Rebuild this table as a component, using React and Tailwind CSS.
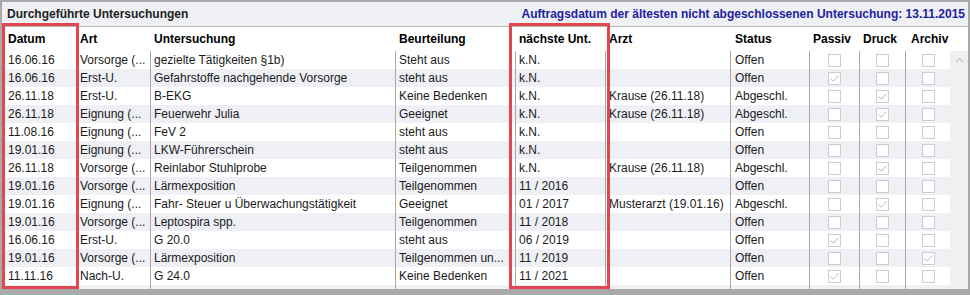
import React from 'react';

const rows = [
  ['16.06.16', 'Vorsorge (...', 'gezielte Tätigkeiten §1b)', 'Steht aus', 'k.N.', '', 'Offen', false, false, false],
  ['16.06.16', 'Erst-U.', 'Gefahrstoffe nachgehende Vorsorge', 'steht aus', 'k.N.', '', 'Offen', true, false, false],
  ['26.11.18', 'Erst-U.', 'B-EKG', 'Keine Bedenken', 'k.N.', 'Krause (26.11.18)', 'Abgeschl.', false, true, false],
  ['26.11.18', 'Eignung (...', 'Feuerwehr Julia', 'Geeignet', 'k.N.', 'Krause (26.11.18)', 'Abgeschl.', false, true, false],
  ['11.08.16', 'Eignung (...', 'FeV 2', 'steht aus', 'k.N.', '', 'Offen', false, false, false],
  ['19.01.16', 'Eignung (...', 'LKW-Führerschein', 'steht aus', 'k.N.', '', 'Offen', false, false, false],
  ['26.11.18', 'Vorsorge (...', 'Reinlabor Stuhlprobe', 'Teilgenommen', 'k.N.', 'Krause (26.11.18)', 'Abgeschl.', false, true, false],
  ['19.01.16', 'Vorsorge (...', 'Lärmexposition', 'Teilgenommen', '11 / 2016', '', 'Offen', false, false, false],
  ['19.01.16', 'Eignung (...', 'Fahr- Steuer u Überwachungstätigkeit', 'Geeignet', '01 / 2017', 'Musterarzt (19.01.16)', 'Abgeschl.', false, true, false],
  ['19.01.16', 'Vorsorge (...', 'Leptospira spp.', 'Teilgenommen', '11 / 2018', '', 'Offen', false, false, false],
  ['16.06.16', 'Erst-U.', 'G 20.0', 'steht aus', '06 / 2019', '', 'Offen', true, false, false],
  ['19.01.16', 'Vorsorge (...', 'Lärmexposition', 'Teilgenommen un...', '11 / 2019', '', 'Offen', false, false, true],
  ['11.11.16', 'Nach-U.', 'G 24.0', 'Keine Bedenken', '11 / 2021', '', 'Offen', true, false, false],
  ['', '', '', '', '', '', '', null, null, null],
];

const cols = 'grid grid-cols-[75px_74px_245px_120px_90px_125px_79px_50px_46px_44px]';

function Check({ on }) {
  if (on === null) return null;
  return (
    <div className="w-[13px] h-[13px] border border-[#cdcdcd] bg-white flex items-center justify-center">
      {on && (
        <svg width="11" height="11" viewBox="0 0 11 11">
          <path d="M1.5 5.5 L4.3 8.3 L9.5 2.5" fill="none" stroke="#b9b9b9" strokeWidth="1" />
        </svg>
      )}
    </div>
  );
}

export default function App() {
  return (
    <div className="relative w-[970px] h-[295px] overflow-hidden bg-white border-x-2 border-t-2 border-b-[6px] border-[#a9a9a9] font-['Liberation_Sans',Arial,sans-serif] text-[12px] text-[#1a1a1a]">
      <div className="h-[25px] bg-[#eef0f4] border-b border-[#b4b4b4] flex items-center justify-between pl-[5px] pr-[3px]">
        <span className="font-bold text-[#222]">Durchgeführte Untersuchungen</span>
        <span className="font-bold text-[#1e22a0]">Auftragsdatum der ältesten nicht abgeschlossenen Untersuchung: 13.11.2015</span>
      </div>

      <div className="flex">
        <div className="w-[948px]">
          <div className={`${cols} h-[24px] items-center font-bold text-black`}>
            <div className="pl-[6px]">Datum</div>
            <div className="pl-[3px]">Art</div>
            <div className="pl-[3px]">Untersuchung</div>
            <div className="pl-[3px]">Beurteilung</div>
            <div className="pl-[3px]">nächste Unt.</div>
            <div className="pl-[3px]">Arzt</div>
            <div className="pl-[4px]">Status</div>
            <div className="pl-[3px]">Passiv</div>
            <div className="pl-[3px]">Druck</div>
            <div className="pl-[5px]">Archiv</div>
          </div>
          {rows.map((r, i) => (
            <div key={i} className={`${cols} h-[18px] items-stretch ${i % 2 ? 'bg-[#eef0f5]' : 'bg-white'}`}>
              <div className="pl-[6px] flex items-center border-r border-[#a8a8a8] whitespace-nowrap">{r[0]}</div>
              <div className="pl-[3px] flex items-center border-r border-[#a8a8a8] whitespace-nowrap">{r[1]}</div>
              <div className="pl-[3px] flex items-center border-r border-[#a8a8a8] whitespace-nowrap">{r[2]}</div>
              <div className="pl-[3px] flex items-center border-r border-[#a8a8a8] whitespace-nowrap">{r[3]}</div>
              <div className="pl-[3px] flex items-center border-r border-[#a8a8a8] whitespace-nowrap">{r[4]}</div>
              <div className="pl-[3px] flex items-center border-r border-[#a8a8a8] whitespace-nowrap">{r[5]}</div>
              <div className="pl-[4px] flex items-center border-r border-[#a8a8a8] whitespace-nowrap">{r[6]}</div>
              <div className="flex items-center justify-center border-r border-[#a8a8a8]"><Check on={r[7]} /></div>
              <div className="flex items-center justify-center border-r border-[#a8a8a8]"><Check on={r[8]} /></div>
              <div className="flex items-center justify-center"><Check on={r[9]} /></div>
            </div>
          ))}
        </div>
        <div className="w-[18px] mt-[24px] bg-[#f0f0f0] flex justify-center pt-[6px] h-[300px]">
          <svg width="9" height="6" viewBox="0 0 9 6">
            <path d="M1 5 L4.5 1.5 L8 5" fill="none" stroke="#c4c4c4" strokeWidth="1.2" />
          </svg>
        </div>
      </div>

      <div className="absolute left-[0px] top-[21px] w-[77px] h-[266px] border-[3px] border-[#e2474d]" />
      <div className="absolute left-[507px] top-[21px] w-[101px] h-[266px] border-[3px] border-[#e2474d]" />
    </div>
  );
}
